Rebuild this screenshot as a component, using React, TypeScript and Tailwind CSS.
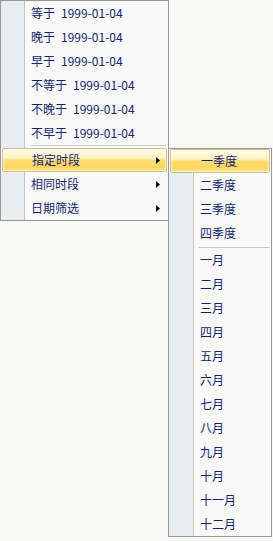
import React from "react";

type Row = { label: string; date?: string; arrow?: boolean; active?: boolean };

const mainTop: Row[] = [
  { label: "等于", date: "1999-01-04" },
  { label: "晚于", date: "1999-01-04" },
  { label: "早于", date: "1999-01-04" },
  { label: "不等于", date: "1999-01-04" },
  { label: "不晚于", date: "1999-01-04" },
  { label: "不早于", date: "1999-01-04" },
];

const mainBottom: Row[] = [
  { label: "指定时段", arrow: true, active: true },
  { label: "相同时段", arrow: true },
  { label: "日期筛选", arrow: true },
];

const quarters: Row[] = [
  { label: "一季度", active: true },
  { label: "二季度" },
  { label: "三季度" },
  { label: "四季度" },
];

const months = ["一月", "二月", "三月", "四月", "五月", "六月", "七月", "八月", "九月", "十月", "十一月", "十二月"];

const Arrow = () => (
  <svg width="4" height="7" viewBox="0 0 4 7" className="shrink-0">
    <path d="M0 0L4 3.5L0 7Z" fill="#000" />
  </svg>
);

const Label = ({ row }: { row: Row }) => (
  <span className="whitespace-nowrap">
    {row.label}
    {row.date && <span className="ml-[6px]">{row.date}</span>}
  </span>
);

// one menu line; the gold bar covers the icon strip as well
const MenuRow = ({ row, strip, pad }: { row: Row; strip: string; pad: string }) => {
  if (row.active) {
    return (
      <div className="h-6 mx-px flex items-center justify-between rounded-[2px] border border-[#d3c08a] bg-[linear-gradient(to_bottom,#fffbeb_0%,#fff2c4_40%,#ffdc70_52%,#ffd65c_82%,#ffe596_100%)] shadow-[inset_0_0_0_1px_rgba(255,255,255,0.55)] pr-[6px]">
        <div className={pad}>
          <Label row={row} />
        </div>
        {row.arrow && <Arrow />}
      </div>
    );
  }
  return (
    <div className="h-6 flex">
      <div className={`${strip} shrink-0 bg-[#e9eef0] border-r border-[#c5c5c5]`} />
      <div className="flex-1 flex items-center justify-between pl-[6px] pr-[8px]">
        <Label row={row} />
        {row.arrow && <Arrow />}
      </div>
    </div>
  );
};

const Separator = ({ strip, line }: { strip: string; line: string }) => (
  <div className="h-[3px] flex">
    <div className={`${strip} shrink-0 bg-[#e9eef0] border-r border-[#c5c5c5]`} />
    <div className="flex-1">
      <div className={`h-px bg-[#c5c5c5] ${line}`} />
    </div>
  </div>
);

export default function App() {
  return (
    <div className="w-[273px] h-[541px] bg-[#f8f8f7] flex items-start font-['Noto_Sans_CJK_SC',sans-serif] text-[12px] leading-6 text-[#0f2474]">
      <div className="w-[169px] shrink-0 border border-[#979797] bg-[#fafafa] flex flex-col">
        {mainTop.map((r) => (
          <MenuRow key={r.label} row={r} strip="w-[24px]" pad="pl-[29px]" />
        ))}
        <Separator strip="w-[24px]" line="ml-[6px] mr-[2px]" />
        {mainBottom.map((r) => (
          <MenuRow key={r.label} row={r} strip="w-[24px]" pad="pl-[29px]" />
        ))}
      </div>
      <div className="w-[104px] shrink-0 mt-[148px] -ml-px border border-[#979797] bg-[#fafafa] flex flex-col">
        {quarters.map((r) => (
          <MenuRow key={r.label} row={r} strip="w-[25px]" pad="pl-[30px]" />
        ))}
        <Separator strip="w-[25px]" line="mt-[2px] ml-[5px] mr-[2px]" />
        {months.map((m) => (
          <MenuRow key={m} row={{ label: m }} strip="w-[25px]" pad="pl-[30px]" />
        ))}
      </div>
    </div>
  );
}
